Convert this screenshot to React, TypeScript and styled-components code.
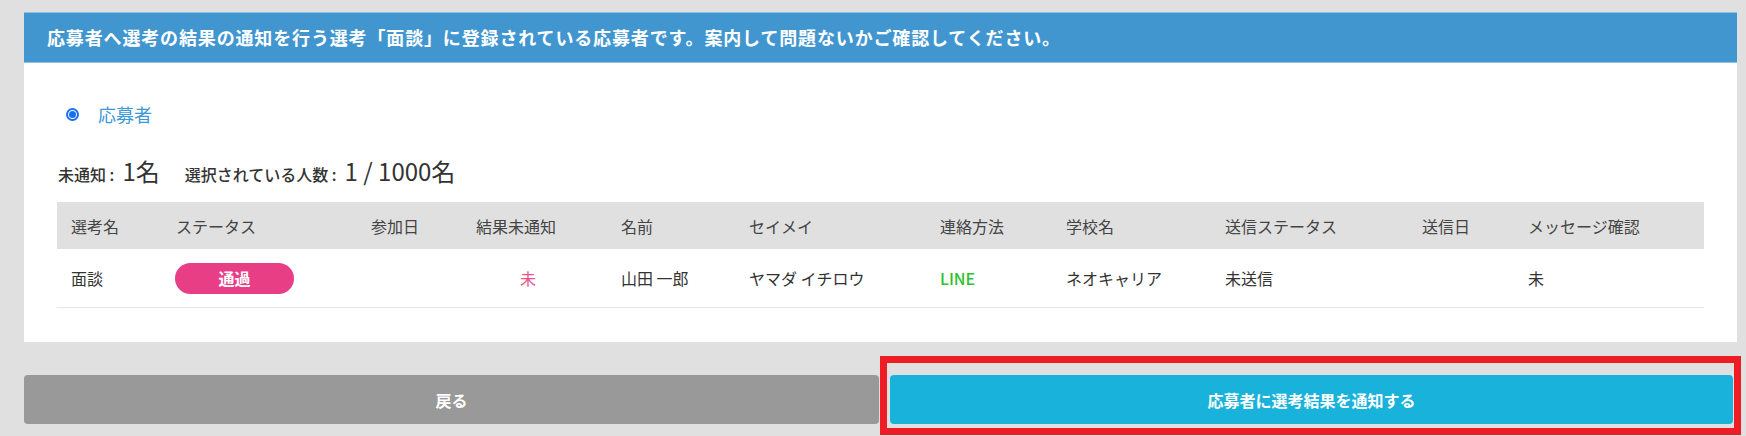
import React from "react";
import styled, { createGlobalStyle } from "styled-components";

const GlobalStyle = createGlobalStyle`
  html, body {
    margin: 0;
    padding: 0;
    background: #e0e0e0;
  }
  body {
    font-family: "Noto Sans CJK JP", "Noto Sans", sans-serif;
    color: #333;
  }
`;

const Page = styled.div`
  padding: 12px 9px 0 24px;
  box-sizing: border-box;
  width: 1746px;
  height: 436px;
  overflow: hidden;
`;

const Card = styled.section`
  background: #fff;
  display: flex;
  flex-direction: column;
`;

const CardHeader = styled.h2`
  margin: 0;
  height: 51px;
  box-sizing: border-box;
  display: flex;
  align-items: center;
  padding: 0 0 1px 23px;
  background: #4296d0;
  border-top: 1px solid #8cc0e6;
  border-bottom: 1px solid #8cc0e6;
  color: #fff;
  font-size: 18px;
  font-weight: 700;
  letter-spacing: 0.85px;
`;

const CardBody = styled.div`
  padding: 39px 33px 34px 33px;
  display: flex;
  flex-direction: column;
`;

const RadioRow = styled.label`
  display: flex;
  align-items: center;
  gap: 19px;
  height: 24px;
  padding-left: 9px;
  color: #3d98d8;
  font-size: 18px;
`;

const RadioDot = styled.span`
  width: 13px;
  height: 13px;
  border-radius: 50%;
  box-sizing: border-box;
  border: 2px solid #1a6ff0;
  background: #fff;
  display: flex;
  align-items: center;
  justify-content: center;
  &::after {
    content: "";
    width: 7px;
    height: 7px;
    border-radius: 50%;
    background: #1a6ff0;
  }
`;

const CountRow = styled.div`
  margin-top: 27px;
  display: flex;
  align-items: baseline;
  gap: 25px;
  height: 32px;
  padding-left: 1px;
`;

const CountItem = styled.div`
  display: flex;
  align-items: baseline;
  gap: 8px;
`;

const CountLabel = styled.span`
  font-size: 16px;
  font-weight: 500;
  color: #333;
`;

const CountValue = styled.span`
  font-size: 24px;
  color: #333;
`;

const Table = styled.table`
  margin-top: 17px;
  width: 1647px;
  border-collapse: collapse;
  table-layout: fixed;
  font-size: 16px;
`;

const HeadCell = styled.th`
  height: 47px;
  padding: 0 0 0 14px;
  background: #e0e0e0;
  text-align: left;
  font-weight: 400;
  color: #444;
  white-space: nowrap;
`;

const Row = styled.tr`
  border-bottom: 1px solid #e6e6e6;
`;

const Cell = styled.td<{ $indent?: number; $color?: string; $weight?: number }>`
  height: 58px;
  padding: 0 0 0 ${(p) => p.$indent ?? 14}px;
  color: ${(p) => p.$color ?? "#333"};
  font-weight: ${(p) => p.$weight ?? 400};
  white-space: nowrap;
`;

const StatusPill = styled.span`
  display: inline-flex;
  align-items: center;
  justify-content: center;
  width: 119px;
  height: 31px;
  border-radius: 16px;
  background: #e83e86;
  color: #fff;
  font-size: 16px;
  font-weight: 700;
  vertical-align: middle;
`;

const ButtonRow = styled.div`
  margin-top: 33px;
  padding-right: 4px;
  display: flex;
  gap: 11px;
`;

const Button = styled.button<{ $variant: "back" | "primary" }>`
  flex: 1;
  height: 49px;
  border: none;
  border-radius: 4px;
  background: ${(p) => (p.$variant === "back" ? "#999999" : "#18b2da")};
  color: #fff;
  font-family: "Noto Sans CJK JP", "Noto Sans", sans-serif;
  font-size: 16px;
  font-weight: 700;
  cursor: pointer;
`;

const Highlight = styled.div`
  flex: 1;
  display: flex;
  position: relative;
  &::after {
    content: "";
    position: absolute;
    left: -10px;
    right: -8px;
    top: -19px;
    bottom: -11px;
    border: 7px solid #ee1c25;
    pointer-events: none;
  }
`;

const columns = [
  { label: "選考名", width: 105 },
  { label: "ステータス", width: 195 },
  { label: "参加日", width: 105 },
  { label: "結果未通知", width: 145 },
  { label: "名前", width: 128 },
  { label: "セイメイ", width: 191 },
  { label: "連絡方法", width: 126 },
  { label: "学校名", width: 159 },
  { label: "送信ステータス", width: 197 },
  { label: "送信日", width: 106 },
  { label: "メッセージ確認", width: 190 },
];

export default function App() {
  return (
    <>
      <GlobalStyle />
      <Page>
        <Card>
          <CardHeader>
            応募者へ選考の結果の通知を行う選考「面談」に登録されている応募者です。案内して問題ないかご確認してください。
          </CardHeader>
          <CardBody>
            <RadioRow>
              <RadioDot />
              応募者
            </RadioRow>
            <CountRow>
              <CountItem>
                <CountLabel>未通知 :</CountLabel>
                <CountValue>1名</CountValue>
              </CountItem>
              <CountItem>
                <CountLabel>選択されている人数 :</CountLabel>
                <CountValue>1 / 1000名</CountValue>
              </CountItem>
            </CountRow>
            <Table>
              <colgroup>
                {columns.map((c) => (
                  <col key={c.label} style={{ width: c.width }} />
                ))}
              </colgroup>
              <thead>
                <tr>
                  {columns.map((c) => (
                    <HeadCell key={c.label}>{c.label}</HeadCell>
                  ))}
                </tr>
              </thead>
              <tbody>
                <Row>
                  <Cell>面談</Cell>
                  <Cell $indent={13}>
                    <StatusPill>通過</StatusPill>
                  </Cell>
                  <Cell />
                  <Cell $indent={58} $color="#e8548b">
                    未
                  </Cell>
                  <Cell>山田 一郎</Cell>
                  <Cell>ヤマダ イチロウ</Cell>
                  <Cell $color="#2cc22c" $weight={500}>
                    LINE
                  </Cell>
                  <Cell>ネオキャリア</Cell>
                  <Cell>未送信</Cell>
                  <Cell />
                  <Cell>未</Cell>
                </Row>
              </tbody>
            </Table>
          </CardBody>
        </Card>
        <ButtonRow>
          <Button $variant="back">戻る</Button>
          <Highlight>
            <Button $variant="primary">応募者に選考結果を通知する</Button>
          </Highlight>
        </ButtonRow>
      </Page>
    </>
  );
}
